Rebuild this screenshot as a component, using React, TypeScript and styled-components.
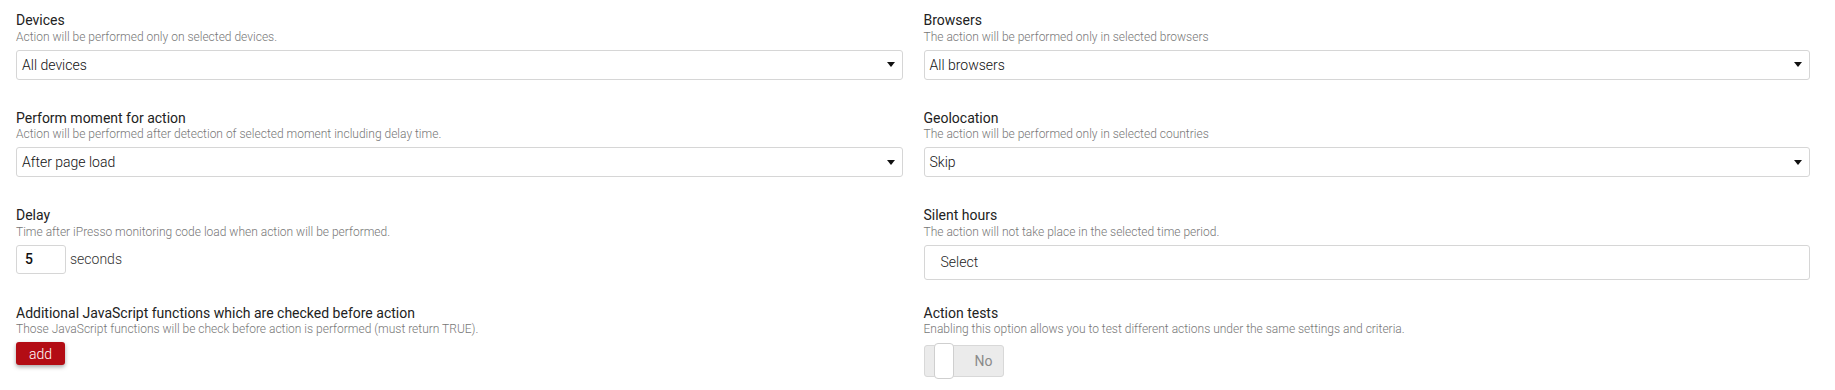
import React from "react";
import styled, { createGlobalStyle } from "styled-components";

const Global = createGlobalStyle`
  html, body { margin: 0; padding: 0; background: #fff; }
  body { font-family: Roboto, "Liberation Sans", Arial, sans-serif; color: #222; }
  * { box-sizing: border-box; }
`;

const Page = styled.div`
  display: grid;
  grid-template-columns: 1fr 1fr;
  column-gap: 21px;
  padding: 12px 25px 0 16px;
  width: 1835px;
`;

const Field = styled.div`
  display: flex;
  flex-direction: column;
  align-items: flex-start;
  margin-bottom: 25px;
`;

const Title = styled.div`
  font-size: 14px;
  line-height: 17.5px;
  color: #222;
`;

const Hint = styled.div`
  font-size: 12px;
  line-height: 15px;
  color: #777;
  font-weight: 300;
  margin-bottom: 5px;
`;

const SelectBox = styled.div`
  width: 100%;
  height: 30px;
  border: 1px solid #d6d6d6;
  border-radius: 3px;
  display: flex;
  align-items: center;
  justify-content: space-between;
  padding: 0 7px 0 5px;
  font-size: 14px;
  font-weight: 300;
  color: #111;
  margin-bottom: 5px;
`;

const Caret = styled.span`
  width: 0;
  height: 0;
  border-left: 4px solid transparent;
  border-right: 4px solid transparent;
  border-top: 5px solid #111;
`;

const PickerBox = styled.div`
  width: 100%;
  height: 35px;
  border: 1px solid #d6d6d6;
  border-radius: 3px;
  display: flex;
  align-items: center;
  padding: 0 16px;
  font-size: 14px;
  font-weight: 300;
  color: #222;
`;

const InlineRow = styled.div`
  display: flex;
  align-items: center;
  gap: 4px;
`;

const NumberBox = styled.div`
  width: 50px;
  height: 29px;
  border: 1px solid #d6d6d6;
  border-radius: 3px;
  display: flex;
  align-items: center;
  padding-left: 8px;
  font-size: 14px;
  font-weight: 500;
  color: #111;
`;

const Unit = styled.span`
  font-size: 14px;
  font-weight: 300;
  color: #333;
`;

const AddButton = styled.button`
  width: 49px;
  height: 23px;
  border: none;
  border-radius: 3px;
  background: #b30c14;
  color: #fff;
  font-family: inherit;
  font-size: 14px;
  font-weight: 300;
  padding: 0;
  box-shadow: 0 2px 4px rgba(0, 0, 0, 0.35);
  cursor: pointer;
`;

const Toggle = styled.div`
  position: relative;
  width: 80px;
  height: 32px;
  margin-top: 3px;
  background: #ebebeb;
  border: 1px solid #d8d8d8;
  border-radius: 3px;
  display: flex;
  align-items: center;
  justify-content: flex-end;
  padding-right: 10px;
  font-size: 14px;
  color: #8a8a8a;
`;

const Knob = styled.span`
  position: absolute;
  left: 9px;
  top: -3px;
  width: 20px;
  height: 36px;
  background: #fff;
  border: 1px solid #cfcfcf;
  border-radius: 4px;
`;

export default function App() {
  return (
    <>
      <Global />
      <Page>
        <Field>
          <Title>Devices</Title>
          <Hint>Action will be performed only on selected devices.</Hint>
          <SelectBox>
            All devices
            <Caret />
          </SelectBox>
        </Field>
        <Field>
          <Title>Browsers</Title>
          <Hint>The action will be performed only in selected browsers</Hint>
          <SelectBox>
            All browsers
            <Caret />
          </SelectBox>
        </Field>

        <Field>
          <Title>Perform moment for action</Title>
          <Hint>Action will be performed after detection of selected moment including delay time.</Hint>
          <SelectBox>
            After page load
            <Caret />
          </SelectBox>
        </Field>
        <Field>
          <Title>Geolocation</Title>
          <Hint>The action will be performed only in selected countries</Hint>
          <SelectBox>
            Skip
            <Caret />
          </SelectBox>
        </Field>

        <Field>
          <Title>Delay</Title>
          <Hint>Time after iPresso monitoring code load when action will be performed.</Hint>
          <InlineRow>
            <NumberBox>5</NumberBox>
            <Unit>seconds</Unit>
          </InlineRow>
        </Field>
        <Field>
          <Title>Silent hours</Title>
          <Hint>The action will not take place in the selected time period.</Hint>
          <PickerBox>Select</PickerBox>
        </Field>

        <Field>
          <Title>Additional JavaScript functions which are checked before action</Title>
          <Hint>Those JavaScript functions will be check before action is performed (must return TRUE).</Hint>
          <AddButton>add</AddButton>
        </Field>
        <Field>
          <Title>Action tests</Title>
          <Hint>Enabling this option allows you to test different actions under the same settings and criteria.</Hint>
          <Toggle>
            <Knob />
            No
          </Toggle>
        </Field>
      </Page>
    </>
  );
}
